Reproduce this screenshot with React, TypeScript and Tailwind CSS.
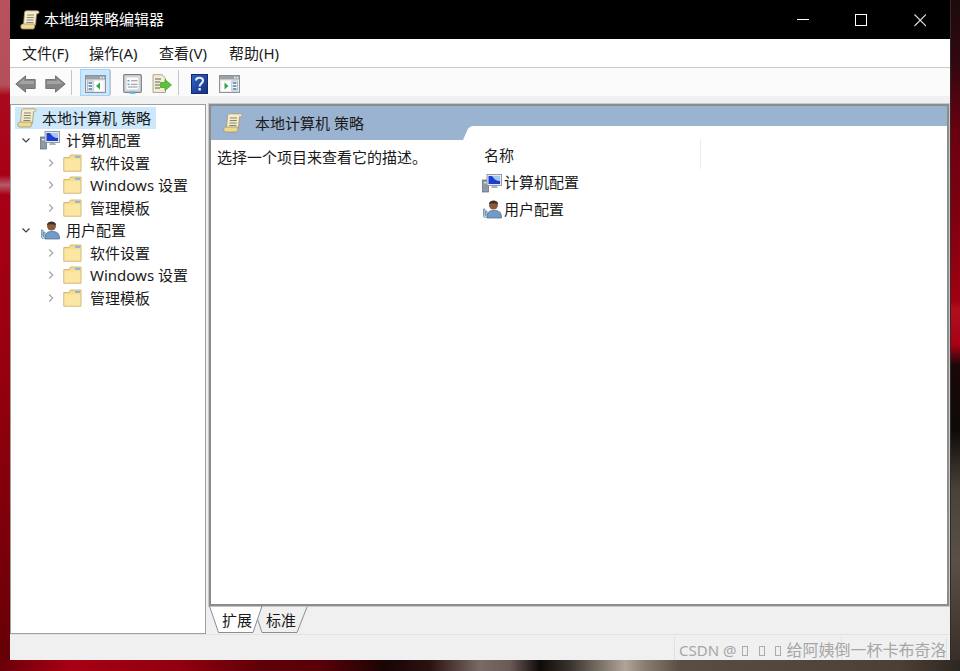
import type { ReactNode } from 'react'

const font = { fontFamily: '"Noto Sans", "Noto Sans CJK SC", sans-serif' }

function ScrollIcon({ size = 20 }: { size?: number }) {
  return (
    <svg width={size} height={size} viewBox="0 0 20 20" className="shrink-0">
      <path d="M4.5 3 C4.5 1 6 0.8 7 0.8 H17.5 C19.5 0.8 19.5 3.8 17.5 3.8 H16.5 L15.5 15 H3.5 Z" fill="#f5ecc9" stroke="#a3956a" strokeWidth="0.8" />
      <path d="M0.8 16.5 C0.8 14.5 2.2 14 3.5 14 H14.5 C15 15 15 18 13.5 19 H3 C1.5 19 0.8 18 0.8 16.5 Z" fill="#edd98f" stroke="#a3956a" strokeWidth="0.8" />
      <path d="M7 5 H14 M6.8 7.5 H13.8 M6.6 10 H13.6 M6.4 12.5 H13.4" stroke="#85837a" strokeWidth="1" />
    </svg>
  )
}

function ComputerIcon() {
  return (
    <svg width="20" height="20" viewBox="0 0 20 20" className="shrink-0">
      <rect x="0.5" y="7" width="6" height="12" fill="#8f9aa6" stroke="#5e6772" strokeWidth="0.7" />
      <rect x="2" y="9" width="3" height="1.4" fill="#dfe6ee" />
      <rect x="5" y="1.5" width="14.5" height="11" fill="#e5e9ed" stroke="#7d8893" strokeWidth="0.8" />
      <path d="M6.5 3 H18 V11 H6.5 Z" fill="#1b3fd0" />
      <path d="M10 3 H18 V8 C14 8 12 6 10 3 Z" fill="#a9c6f0" />
      <path d="M10 13 H15 L16 15 H9 Z" fill="#aab2ba" />
    </svg>
  )
}

function UserIcon() {
  return (
    <svg width="20" height="20" viewBox="0 0 20 20" className="shrink-0">
      <path d="M5 19 C5 13 7 11.5 12 11.5 C17 11.5 19.5 13 19.5 19 Z" fill="#6f9cc8" stroke="#47688a" strokeWidth="0.7" />
      <circle cx="11.5" cy="6" r="4.5" fill="#8a5a3c" />
      <path d="M7 5 C7 1 16 0.5 16 5 C13 4 10 4 7 5 Z" fill="#3d3026" />
      <path d="M1.5 10 V17 C1.5 19 5 19 5 17 V12 H3.6 V16.5 H3 V10 Z" fill="#cfe0ee" stroke="#4c7aa0" strokeWidth="0.7" />
    </svg>
  )
}

function FolderIcon() {
  return (
    <svg width="19" height="18" viewBox="0 0 19 18" className="shrink-0">
      <path d="M0.8 3.5 H6 L7.5 1 H18 V17.2 H0.8 Z" fill="#f5dc8e" stroke="#cdb26a" strokeWidth="0.9" />
      <rect x="12" y="2" width="5" height="1.8" fill="#7fb3e4" />
      <path d="M1.5 5.2 H17.3 V16.5 H1.5 Z" fill="#fbe6a4" />
    </svg>
  )
}

function Chevron({ open }: { open?: boolean }) {
  return (
    <svg width="10" height="10" viewBox="0 0 10 10" className="shrink-0">
      {open ? (
        <path d="M1.5 3.5 L5 7 L8.5 3.5" fill="none" stroke="#404040" strokeWidth="1.2" />
      ) : (
        <path d="M3.2 1.5 L6.7 5 L3.2 8.5" fill="none" stroke="#a6a6a6" strokeWidth="1.2" />
      )}
    </svg>
  )
}

function ArrowIcon({ flip }: { flip?: boolean }) {
  return (
    <svg width="21" height="18" viewBox="0 0 21 18" className={flip ? 'shrink-0 -scale-x-100' : 'shrink-0'}>
      <path d="M10.5 0.8 L0.8 9 L10.5 17.2 V13.5 H20.2 V4.5 H10.5 Z" fill="#858585" stroke="#777" strokeWidth="1" />
      <path d="M9 4 L3 9 H19 V6 H9 Z" fill="#a4a4a4" />
    </svg>
  )
}

function PaneIcon({ side }: { side: 'left' | 'right' }) {
  return (
    <svg width="21" height="18" viewBox="0 0 21 18" className="shrink-0">
      <rect x="0.5" y="0.5" width="20" height="17" fill="#e8ecef" stroke="#8b9298" />
      <rect x="1" y="1" width="19" height="3.5" fill="#9aa1a7" />
      <rect x="15" y="1.8" width="1.6" height="1.6" fill="#eef1f3" />
      <rect x="17.6" y="1.8" width="1.6" height="1.6" fill="#eef1f3" />
      {side === 'left' ? (
        <>
          <rect x="2.5" y="6" width="5.5" height="10" fill="#fff" stroke="#9fa7ad" strokeWidth="0.7" />
          <path d="M3.5 8 H7 M3.5 11 H7 M3.5 14 H7" stroke="#3f78b5" strokeWidth="1.3" />
          <rect x="9.5" y="6" width="9" height="10" fill="#fff" />
          <path d="M15 7.5 V14.5 L11 11 Z" fill="#2fa84a" />
        </>
      ) : (
        <>
          <rect x="2.5" y="6" width="9" height="10" fill="#fff" />
          <path d="M5.5 7.5 V14.5 L9.5 11 Z" fill="#2fa84a" />
          <rect x="13" y="6" width="5.5" height="10" fill="#fff" stroke="#9fa7ad" strokeWidth="0.7" />
          <path d="M14 8 H17.5 M14 11 H17.5 M14 14 H17.5" stroke="#3f78b5" strokeWidth="1.3" />
        </>
      )}
    </svg>
  )
}

function PropertiesIcon() {
  return (
    <svg width="19" height="20" viewBox="0 0 19 20" className="shrink-0">
      <rect x="0.7" y="0.7" width="17.6" height="17.6" rx="1" fill="#dcdfe2" stroke="#7b7f84" strokeWidth="1.2" />
      <rect x="3" y="3" width="13" height="13" fill="#fbfbfb" stroke="#b6bbc0" strokeWidth="0.6" />
      <rect x="4.5" y="6" width="2" height="1.6" fill="#6f9fca" />
      <rect x="4.5" y="9.5" width="2" height="1.6" fill="#6f9fca" />
      <path d="M8 6.8 H14.5 M8 10.3 H14.5 M5 13 H14.5" stroke="#8d9196" strokeWidth="1" />
      <rect x="6.5" y="17.5" width="6" height="2.2" fill="#55aee0" />
    </svg>
  )
}

function ExportIcon() {
  return (
    <svg width="20" height="20" viewBox="0 0 20 20" className="shrink-0">
      <path d="M1 0.7 H10 L13.5 4 V18.5 H1 Z" fill="#f3ecd2" stroke="#a7a08a" strokeWidth="0.9" />
      <path d="M3 5 H9 M3 8 H8 M3 11 H8 M3 14 H8" stroke="#66645c" strokeWidth="1" />
      <path d="M8.5 8.5 H13 V5.5 L19.5 11 L13 16.5 V13.5 H8.5 Z" fill="#5cc43a" stroke="#3f9a2a" strokeWidth="0.7" />
    </svg>
  )
}

function HelpIcon() {
  return (
    <svg width="17" height="20" viewBox="0 0 17 20" className="shrink-0">
      <defs>
        <linearGradient id="helpFill" x1="0" y1="0" x2="1" y2="1">
          <stop offset="0" stopColor="#2e63c9" />
          <stop offset="1" stopColor="#15307f" />
        </linearGradient>
      </defs>
      <rect x="0.5" y="0.5" width="16" height="19" fill="url(#helpFill)" stroke="#16286a" />
      <path d="M5 6.5 C5 2.8 12 2.8 12 6.5 C12 9.5 8.6 9.2 8.6 12.5" fill="none" stroke="#e6ecfa" strokeWidth="2.1" />
      <rect x="7.4" y="14" width="2.4" height="2.5" fill="#e6ecfa" />
    </svg>
  )
}

function TreeRow({ chevron, icon, label }: { chevron: 'open' | 'closed'; icon: ReactNode; label: string }) {
  const open = chevron === 'open'
  return (
    <div className={`flex h-[22.5px] items-center ${open ? 'pl-[6px]' : 'pl-[31px]'}`}>
      <span className={open ? 'mr-[9px]' : 'mr-[7px]'}>
        <Chevron open={open} />
      </span>
      {icon}
      <span className={`whitespace-nowrap ${open ? 'ml-[6px]' : 'ml-[8px]'}`}>{label}</span>
    </div>
  )
}

function ToolbarDivider({ className = '' }: { className?: string }) {
  return <div className={`-mt-[3px] h-[25px] w-px bg-[#c4c4c4] ${className}`} />
}

function GroupRows() {
  return (
    <>
      <TreeRow chevron="closed" icon={<FolderIcon />} label="软件设置" />
      <TreeRow chevron="closed" icon={<FolderIcon />} label="Windows 设置" />
      <TreeRow chevron="closed" icon={<FolderIcon />} label="管理模板" />
    </>
  )
}

export default function App() {
  return (
    <div className="flex h-[671px] w-[960px] flex-col overflow-hidden text-[15px] text-[#1a1a1a]" style={font}>
      <div className="flex h-[660px]">
        <div className="w-[10px] bg-[linear-gradient(to_bottom,#b8525c_0px,#b4505a_85px,#ab0a1e_95px,#a80016_175px,#b85a68_185px,#a80016_195px,#9c0012_330px,#780008_560px,#640006_660px)]" />

        <div className="flex w-[940px] flex-col bg-[#f0f0f0]">
          <div className="flex h-[39px] items-center bg-black text-white">
            <span className="ml-[10px]">
              <ScrollIcon />
            </span>
            <span className="ml-[4px]">本地组策略编辑器</span>
            <svg width="140" height="20" viewBox="0 0 140 20" className="ml-auto mr-[24px] shrink-0">
              <path d="M11 9.5 H23" stroke="#fff" strokeWidth="1" />
              <rect x="69.5" y="4.5" width="11" height="11" fill="none" stroke="#fff" strokeWidth="1" />
              <path d="M128.5 4.5 L140 16 M140 4.5 L128.5 16" stroke="#ddd" strokeWidth="1.1" />
            </svg>
          </div>

          <div className="flex h-[29px] items-center border-b border-[#c8c8cf] bg-white pl-[12px]">
            <span className="w-[67px]">文件(F)</span>
            <span className="w-[70px]">操作(A)</span>
            <span className="w-[70px]">查看(V)</span>
            <span className="w-[70px]">帮助(H)</span>
          </div>

          <div className="flex h-[28px] items-center bg-[#fbfbfb] pl-[5px] pt-[4px]">
            <ArrowIcon />
            <span className="ml-[9px]">
              <ArrowIcon flip />
            </span>
            <ToolbarDivider className="ml-[5px]" />
            <div className="-mt-[4px] ml-[8px] flex h-[27px] w-[30px] items-center justify-center border border-[#a5d3f7] bg-[#cce8ff] pt-[4px]">
              <PaneIcon side="left" />
            </div>
            <ToolbarDivider />
            <span className="ml-[12px]">
              <PropertiesIcon />
            </span>
            <span className="ml-[10px]">
              <ExportIcon />
            </span>
            <ToolbarDivider className="ml-[6px]" />
            <span className="ml-[12px]">
              <HelpIcon />
            </span>
            <span className="ml-[11px]">
              <PaneIcon side="right" />
            </span>
          </div>

          <div className="mt-[8px] flex h-[530px]">
            <div className="h-full w-[196px] border border-[#a0a0a0] bg-white pl-[4px] pt-[1.5px]">
              <div className="flex h-[22.5px] w-[141px] items-center bg-[#cde8fb] pl-[2px]">
                <ScrollIcon />
                <span className="ml-[5px] whitespace-nowrap">本地计算机 策略</span>
              </div>
              <TreeRow chevron="open" icon={<ComputerIcon />} label="计算机配置" />
              <GroupRows />
              <TreeRow chevron="open" icon={<UserIcon />} label="用户配置" />
              <GroupRows />
            </div>

            <div className="ml-[3px] flex h-full w-[740px] flex-col">
              <div className="flex h-[502px] border-2 border-[#8c8c8c] bg-white outline outline-1 outline-[#c9c9c9]">
                <div className="w-[252px] shrink-0">
                  <div className="flex h-[34px] items-center bg-[#9ab3d1] pl-[12px]">
                    <ScrollIcon size={20} />
                    <span className="ml-[12px] whitespace-nowrap">本地计算机 策略</span>
                  </div>
                  <p className="pl-[6px] pt-[6px]">选择一个项目来查看它的描述。</p>
                </div>
                <div className="relative flex-1">
                  <div className="h-[20px] bg-[#9ab3d1]" />
                  <svg width="12" height="34" viewBox="0 0 12 34" className="absolute left-0 top-0">
                    <path d="M0 0 H12 V20 C7 20 5 22 4 25 L0 34 Z" fill="#9ab3d1" />
                  </svg>
                  <div className="mt-[13px] flex h-[30px] w-[238px] items-center border-r border-[#ececec] pl-[21px] pt-[2px]">名称</div>
                  <div className="flex h-[27px] items-center pl-[19px]">
                    <ComputerIcon />
                    <span className="ml-[2px]">计算机配置</span>
                  </div>
                  <div className="flex h-[26px] items-center pl-[19px]">
                    <UserIcon />
                    <span className="ml-[2px]">用户配置</span>
                  </div>
                </div>
              </div>

              <div className="flex h-[28px]">
                <div className="relative h-[27px] w-[54px]">
                  <svg width="54" height="27" viewBox="0 0 54 27" className="absolute inset-0">
                    <path d="M0.5 0 L9.5 26.5 H44 L53 0 Z" fill="#fff" stroke="#8c8c8c" />
                  </svg>
                  <span className="absolute left-[13px] top-[3px]">扩展</span>
                </div>
                <div className="relative -ml-[6px] h-[27px] w-[52px]">
                  <svg width="52" height="27" viewBox="0 0 52 27" className="absolute inset-0">
                    <path d="M0.5 13 L5 26.5 H40 L50 1" fill="#f0f0f0" stroke="#8c8c8c" />
                  </svg>
                  <span className="absolute left-[9px] top-[3px]">标准</span>
                </div>
              </div>
            </div>
          </div>

          <div className="relative flex h-[26px] border-t border-[#e3e3e3]">
            <div className="ml-[664px] mt-[2px] w-[167px] border-l border-[#e0e0e0]" />
            <div className="mt-[2px] w-[106px] border-x border-[#e0e0e0]" />
            <div className="absolute left-[669px] top-[5px] flex items-end text-[16px] leading-[20px] text-[#a6a6a6]">
              <span className="whitespace-nowrap text-[15px]">CSDN @</span>
              <span className="mb-[4px] ml-[6px] h-[10px] w-[6px] border border-[#ababab]" />
              <span className="mb-[4px] ml-[11px] h-[10px] w-[6px] border border-[#ababab]" />
              <span className="mb-[4px] ml-[10px] h-[10px] w-[6px] border border-[#ababab]" />
              <span className="ml-[5px] whitespace-nowrap">给阿姨倒一杯卡布奇洛</span>
            </div>
          </div>
        </div>

        <div className="w-[10px] border-l border-[#2e2a28] bg-[linear-gradient(to_bottom,#1c0a0a_0px,#300810_60px,#6a0010_130px,#800010_220px,#a00012_300px,#b0101e_310px,#a80016_345px,#1a0808_365px,#0e0a08_430px,#4a4238_490px,#5a5045_560px,#3a2f28_660px)]" />
      </div>

      <div className="h-[11px] bg-[linear-gradient(to_right,#6a0008_0px,#a80012_70px,#90000e_180px,#600008_260px,#5a0008_320px,#1a0505_385px,#2a1210_430px,#7a6a66_480px,#6a5a55_510px,#0e0a08_540px,#3a332d_570px,#b0a498_625px,#8a7d70_645px,#5a4e44_680px,#4c4036_900px,#2e2620_960px)]" />
    </div>
  )
}
